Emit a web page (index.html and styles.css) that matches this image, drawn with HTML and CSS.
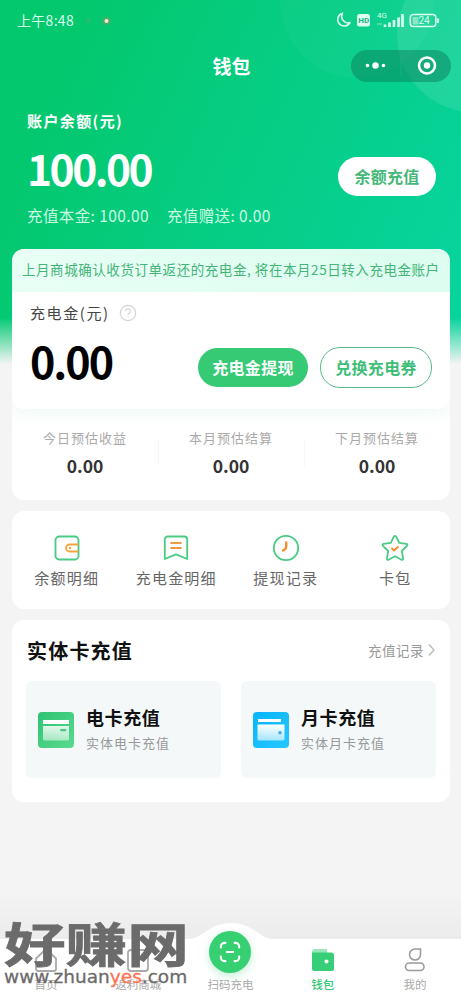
FILE: index.html
```html
<!DOCTYPE html>
<html lang="zh-CN">
<head>
<meta charset="utf-8">
<title>钱包</title>
<link rel="stylesheet" href="styles.css">
</head>
<body>
<div class="screen">
  <div class="backdrop"><i class="bubble bubble-left"></i><i class="bubble bubble-right"></i></div>

  <header class="status">
    <span class="time">上午8:48</span>
    <svg class="notice" width="32" height="14" viewBox="0 0 32 14"><path d="M1 5l4 2-4 2" fill="none" stroke="#4fae70"/><circle cx="21.500" cy="7" r="4" fill="#e8764f" opacity=".3"/><circle cx="21.500" cy="7" r="2" fill="#ffe4d8"/></svg>
    <svg class="signals" width="106" height="20" viewBox="0 0 106 20" fill="none">
      <path d="M5.500 3.300A6.500 6.500 0 1 0 13 12.600A6.500 6.500 0 0 1 5.500 3.300Z" stroke="#ddfff0" stroke-width="1.600" stroke-linejoin="round"/>
      <rect x="20" y="4" width="13" height="12.500" rx="2.500" fill="#ddfff0"/>
      <text class="hd" x="21.300" y="13.200">HD</text>
      <text class="net" x="40" y="8">4G</text>
      <path d="M40 14h5" stroke="#8ae8bf"/>
      <path d="M48 17v-2.500M52.500 17v-4.500M57 17v-7M61.500 17v-9.500M65.500 17V4" stroke="#ddfff0" stroke-width="2.600"/>
      <rect x="73.300" y="4.500" width="25.500" height="12" rx="3" stroke="#ddfff0" stroke-width="1.500"/>
      <rect x="75.500" y="7" width="6" height="7.500" rx="1" fill="#8de6c3"/>
      <path d="M101 8.500v4.500" stroke="#ddfff0" stroke-width="2"/>
      <text class="charge" x="81.500" y="14">24</text>
    </svg>
  </header>

  <nav class="titlebar">
    <h1 class="title">钱包</h1>
    <div class="capsule">
      <svg width="100" height="32" viewBox="0 0 100 32"><g fill="#fff"><circle cx="16.500" cy="15.500" r="1.800"/><circle cx="24.500" cy="15.500" r="3.200"/><circle cx="32.500" cy="15.500" r="1.800"/><circle cx="76" cy="15.500" r="3.200"/></g><path d="M50 7v18" stroke="#fff" opacity=".08"/><circle cx="76" cy="15.500" r="8" fill="none" stroke="#fff" stroke-width="2.500"/></svg>
    </div>
  </nav>

  <section class="balance">
    <div class="balance-info">
      <div class="balance-label">账户余额(元)</div>
      <div class="balance-amount">100.00</div>
      <div class="balance-split"><span class="principal">充值本金: 100.00</span><span>充值赠送: 0.00</span></div>
    </div>
    <button class="pill recharge">余额充值</button>
  </section>

  <main class="cards">
    <section class="card fund">
      <div class="fund-top">
        <div class="tip">上月商城确认收货订单返还的充电金, 将在本月25日转入充电金账户</div>
        <div class="fund-body">
          <div class="fund-left">
            <div class="fund-label"><span>充电金(元)</span>
              <svg width="18" height="18" viewBox="0 0 18 18" fill="none" stroke="#d4d4d4" stroke-width="1.200"><circle cx="9" cy="9" r="7.700"/><path d="M6.700 7.200a2.300 2.300 0 1 1 3.500 2q-1.200.7-1.200 1.700M9 12.200v1.100"/></svg>
            </div>
            <div class="fund-amount">0.00</div>
          </div>
          <button class="pill withdraw">充电金提现</button>
          <button class="pill exchange">兑换充电券</button>
        </div>
      </div>
      <div class="stats">
        <div class="stat"><span class="stat-name">今日预估收益</span><b class="stat-value">0.00</b></div>
        <div class="stat"><span class="stat-name">本月预估结算</span><b class="stat-value">0.00</b></div>
        <div class="stat"><span class="stat-name">下月预估结算</span><b class="stat-value">0.00</b></div>
      </div>
    </section>

    <section class="card links">
      <div class="link"><svg width="28" height="28" viewBox="0 0 28 28" fill="none" stroke-width="1.800"><rect x="2.500" y="2.500" width="23" height="23" rx="3.500" stroke="#4acb83"/><path d="M25.500 10.500h-9a3.500 3.500 0 0 0 0 7h9" stroke="#f1a43b"/><circle cx="17" cy="14" r="1.200" fill="#f1a43b"/></svg><span>余额明细</span></div>
      <div class="link"><svg width="28" height="28" viewBox="0 0 28 28" fill="none" stroke-width="1.800"><path d="M2.800 25V5.500a3 3 0 0 1 3-3h16.400a3 3 0 0 1 3 3V25L14 20.300Z" stroke="#4acb83" stroke-linejoin="round"/><path d="M8.300 9h11.400M8.300 14h11.400" stroke="#ee9c42" stroke-width="1.900"/></svg><span>充电金明细</span></div>
      <div class="link"><svg width="28" height="28" viewBox="0 0 28 28" fill="none"><circle cx="14" cy="14" r="12.200" stroke="#4acb83" stroke-width="1.800"/><path d="M14.200 7.500v5.300q0 2.700-4 4" stroke="#f3902f" stroke-width="2.400"/></svg><span>提现记录</span></div>
      <div class="link"><svg width="28" height="28" viewBox="0 0 28 28" fill="none" stroke-linejoin="round"><path d="M12.800 2.700q1.200-1.700 2.400 0l3 6.100 7.200 1.100q1.700.6.600 2l-5.200 5.100 1.300 7.500q0 1.800-1.700 1.200L14 22.300l-6.400 3.400q-1.700.6-1.700-1.200L7.200 17 2 11.900q-1.100-1.400.6-2l7.200-1.100Z" stroke="#4acb83" stroke-width="1.800"/><path d="M10.500 14l2.500 2.500 4.500-4" stroke="#f3902f" stroke-width="2"/></svg><span>卡包</span></div>
    </section>

    <section class="card physical">
      <div class="physical-head">
        <h2 class="heading">实体卡充值</h2>
        <div class="history">充值记录<svg width="9" height="14" viewBox="0 0 9 14"><path d="M2 1.500L7 7l-5 5.500" fill="none" stroke="#b5b5b5" stroke-width="1.200"/></svg></div>
      </div>
      <div class="options">
        <div class="option">
          <svg width="36" height="36" viewBox="0 0 36 36"><defs><linearGradient id="green" x2="1" y2="1"><stop stop-color="#2fc370"/><stop offset="1" stop-color="#5bda90"/></linearGradient><linearGradient id="fade" x2="0" y2="1"><stop stop-color="#fff"/><stop offset="1" stop-color="#fff" stop-opacity=".6"/></linearGradient></defs><rect width="36" height="36" rx="4" fill="url(#green)"/><path d="M5 8h26v4H5z" fill="#fff"/><path d="M5 14h26v13a1.500 1.500 0 0 1-1.500 1.500h-23A1.500 1.500 0 0 1 5 27Z" fill="url(#fade)" opacity=".85"/><rect x="22" y="17" width="6.500" height="2.200" rx="1.100" fill="#4bc981"/></svg>
          <div class="option-text"><strong>电卡充值</strong><span>实体电卡充值</span></div>
        </div>
        <div class="option">
          <svg width="36" height="36" viewBox="0 0 36 36"><defs><linearGradient id="blue" x2="1" y2="1"><stop stop-color="#08b5fb"/><stop offset="1" stop-color="#25c7ff"/></linearGradient></defs><rect width="36" height="36" rx="4" fill="url(#blue)"/><path d="M5 7h23v3H5z" fill="#fff"/><path d="M4.500 12.500h27v14.500a1.500 1.500 0 0 1-1.500 1.500H6A1.500 1.500 0 0 1 4.500 27Z" fill="url(#fade)"/><circle cx="27" cy="20.700" r="1.800" fill="#4fa9df"/></svg>
          <div class="option-text"><strong>月卡充值</strong><span>实体月卡充值</span></div>
        </div>
      </div>
    </section>
  </main>

  <footer class="tabbar">
    <svg class="tab-shape" width="461" height="80" viewBox="0 0 461 80"><path d="M0 19H189C202 19 209 3 231 3s29 16 42 16H461V80H0Z" fill="#fff"/></svg>
    <div class="tab"><svg width="26" height="26" viewBox="0 0 26 26" fill="none" stroke="#aaa" stroke-width="1.800"><path d="M3 11.500L13 2l10 9.500V22a2 2 0 0 1-2 2H5a2 2 0 0 1-2-2Z" stroke-linejoin="round"/></svg><span>首页</span></div>
    <div class="tab"><svg width="26" height="26" viewBox="0 0 26 26" fill="none" stroke="#aaa" stroke-width="1.800"><rect x="3" y="3" width="20" height="21" rx="3"/><path d="M8 9q5 8 10 0"/></svg><span>返利商城</span></div>
    <div class="tab"><div class="scan"><svg width="22" height="22" viewBox="0 0 24 24" fill="none" stroke="#fff" stroke-width="2.300" stroke-linecap="round"><path d="M2 7V6a4 4 0 0 1 4-4h1M17 2h1a4 4 0 0 1 4 4v1M22 17v1a4 4 0 0 1-4 4h-1M7 22H6a4 4 0 0 1-4-4v-1M8.500 12h7"/></svg></div><span>扫码充电</span></div>
    <div class="tab tab-active"><svg width="26" height="26" viewBox="0 0 26 26"><path d="M2 5a3 3 0 0 1 3-3h12v4H2Z" fill="#98e7b8"/><path d="M2 5.500h19a3 3 0 0 1 3 3V22a2 2 0 0 1-2 2H4a2 2 0 0 1-2-2Z" fill="#37ce78"/><circle cx="16.500" cy="14.500" r="2" fill="#fff"/></svg><span>钱包</span></div>
    <div class="tab"><svg width="26" height="26" viewBox="0 0 26 26" fill="none" stroke="#9b9b9b" stroke-width="1.600"><path d="M13 2h5.500v5.500A5.500 5.500 0 1 1 13 2Z"/><rect x="3.500" y="16" width="18.500" height="7.500" rx="3.750"/></svg><span>我的</span></div>
  </footer>

  <div class="watermark"><div class="mark-name">好赚网</div><div class="mark-site">www.zhuan<em>yes</em>.com</div></div>
</div>
</body>
</html>
```
FILE: styles.css
```css
* { box-sizing: border-box; }
body { margin: 0; }
h1, h2 { margin: 0; }
svg { display: block; flex: none; }
.screen {
  position: relative; width: 461px; height: 1000px; overflow: hidden;
  display: flex; flex-direction: column; background: #f4f4f4;
  font-family: "Noto Sans CJK SC", sans-serif; white-space: nowrap;
}
.backdrop {
  position: absolute; inset: 0 0 auto; height: 366px; overflow: hidden;
  background: linear-gradient(115deg, #04c86e 15%, #07d39b 90%);
  -webkit-mask-image: linear-gradient(#000 318px, transparent 364px);
  mask-image: linear-gradient(#000 318px, transparent 364px);
}
.bubble { position: absolute; border-radius: 50%; }
.bubble-left { left: 280px; top: -76px; width: 154px; height: 154px; background: rgba(255,255,255,.035); }
.bubble-right { left: 397px; top: -42px; width: 154px; height: 154px; background: rgba(255,255,255,.1); }

.status { position: relative; height: 41px; display: flex; align-items: center; padding: 0 18px 0 17px; color: #d6ffec; }
.time { font-size: 14px; line-height: 20px; letter-spacing: .3px; margin-top: -1px; }
.notice { margin-left: 11px; }
.signals { margin-left: auto; margin-top: -1px; }
.hd { font: bold 8px Roboto, sans-serif; fill: #12b883; }
.net { font: 8px Roboto, sans-serif; fill: #ddfff0; }
.charge { font: 10px Roboto, sans-serif; fill: #ddfff0; }

.titlebar { position: relative; height: 51px; display: grid; grid-template-columns: 1fr 100px 1fr; align-items: center; padding-right: 10px; padding-left: 12px; }
.title { grid-column: 2; text-align: center; color: #fff; font-size: 19px; line-height: 28px; font-weight: 700; margin-top: -2px; }
.capsule { justify-self: end; width: 100px; height: 32px; margin-top: -1px; border-radius: 16px; background: rgba(8,112,80,.42); }

.balance { position: relative; height: 157px; display: flex; justify-content: space-between; padding: 17px 25px 0 27px; color: #fff; }
.balance-label { font-size: 15px; line-height: 24px; font-weight: 700; letter-spacing: 1.4px; }
.balance-amount { margin-top: 7px; font-size: 42.500px; line-height: 56px; font-weight: 700; letter-spacing: -2.5px; }
.balance-split { margin-top: 7px; display: flex; gap: 18px; color: #c9fae3; font-size: 15.500px; line-height: 24px; letter-spacing: .4px; }
.pill { border: 0; padding: 0; height: 39px; border-radius: 20px; font: 700 16px/36px "Noto Sans CJK SC", sans-serif; text-align: center; white-space: nowrap; letter-spacing: .3px; }
.recharge { width: 98px; margin-top: 48px; padding-bottom: 2px; margin-top: 48px; background: #fff; color: #44b878; }

.cards { position: relative; display: flex; flex-direction: column; gap: 11px; padding: 0 11px 0 12px; }
.card { background: #fff; border-radius: 12px; }
.fund { height: 251px; overflow: hidden; }
.fund-top { height: 160px; background: #fff; border-radius: 12px; box-shadow: 0 4px 18px rgba(40,190,130,.09); overflow: hidden; position: relative; }
.tip { height: 43px; background: linear-gradient(100deg, #e8fff5, #dcfdf0); color: #45b477; padding-left: 10px; font-size: 13.5px; line-height: 41px; letter-spacing: .56px; }
.fund-body { display: flex; padding: 0 18px; }
.fund-left { width: 168px; }
.fund-label { display: flex; align-items: center; gap: 9px; padding-top: 9px; color: #444; font-size: 15px; line-height: 24px; letter-spacing: 1.6px; }
.fund-label span { width: 80px; }
.fund-amount { margin-top: 7px; color: #000; font-size: 43px; line-height: 56px; font-weight: 700; letter-spacing: -2px; }
.withdraw { width: 110px; margin-top: 56px; padding-bottom: 2px; background: #36ca75; color: #fff; }
.exchange { width: 112px; height: 41px; margin: 55px 0 0 12px; padding-bottom: 2px; background: #fff; color: #3fbe79; border: 1px solid #55bd87; }
.stats { display: grid; grid-template-columns: repeat(3, 1fr); padding-top: 18px; }
.stat { position: relative; display: flex; flex-direction: column; align-items: center; }
.stat + .stat { background: linear-gradient(#f8f8f8, #f8f8f8) 0 12px / 1px 28px no-repeat; }
.stat-name { font-size: 13px; line-height: 21px; color: #aaa; letter-spacing: 1px; }
.stat-value { margin-top: 5px; font-size: 17.500px; line-height: 26px; color: #333; }

.links { height: 98px; display: grid; grid-template-columns: repeat(4, 1fr); padding-top: 23px; }
.link { display: flex; flex-direction: column; align-items: center; gap: 5px; font-size: 15px; line-height: 22px; color: #666; letter-spacing: 1.2px; }

.physical { height: 182px; padding: 17px 14px 0; }
.physical-head { display: flex; justify-content: space-between; height: 28px; }
.heading { font-size: 20px; line-height: 27px; letter-spacing: 1.2px; color: #111; padding-left: 1px; }
.history { display: flex; align-items: center; height: 26px; gap: 3px; font-size: 13.500px; letter-spacing: .5px; color: #999; }
.options { display: grid; grid-template-columns: 1fr 1fr; gap: 20px; margin-top: 16px; }
.option { height: 97px; border-radius: 6px; background: #f4f8f9; display: flex; align-items: center; padding-left: 12px; gap: 12px; }
.option-text { display: flex; flex-direction: column; margin-top: -3px; }
.option-text strong { font-size: 18px; line-height: 28px; letter-spacing: .6px; color: #111; }
.option-text span { font-size: 13px; line-height: 22px; letter-spacing: 1px; color: #999; margin-top: 1px; }

.tabbar { position: relative; margin-top: auto; height: 80px; display: grid; grid-template-columns: repeat(5, 1fr); align-items: end; padding-bottom: 7px; }
.tabbar::before { content: ""; position: absolute; inset: -30px 0 auto; height: 50px; background: linear-gradient(rgba(0,0,0,0), rgba(0,0,0,.035)); }
.tab-shape { position: absolute; inset: 0; }
.tab { position: relative; display: flex; flex-direction: column; align-items: center; color: #aaa; font-size: 11.500px; line-height: 18px; gap: 2px; }
.tab-active { color: #36c777; font-weight: 500; }
.scan { width: 42px; height: 42px; border-radius: 50%; background: #36d073; box-shadow: 0 3px 9px rgba(54,208,115,.3); display: grid; place-items: center; }

.watermark { position: absolute; left: 4px; top: 917px; width: 190px; color: #6b6b6b; }
.mark-name { font-size: 47px; line-height: 50px; font-weight: 700; transform: scaleX(1.31); transform-origin: left; -webkit-text-stroke: .8px currentColor; }
.mark-site { font: 18.500px/20px "DejaVu Sans", sans-serif; -webkit-text-stroke: .3px currentColor; }
.mark-site em { font-style: normal; color: #ff704f; }
```
